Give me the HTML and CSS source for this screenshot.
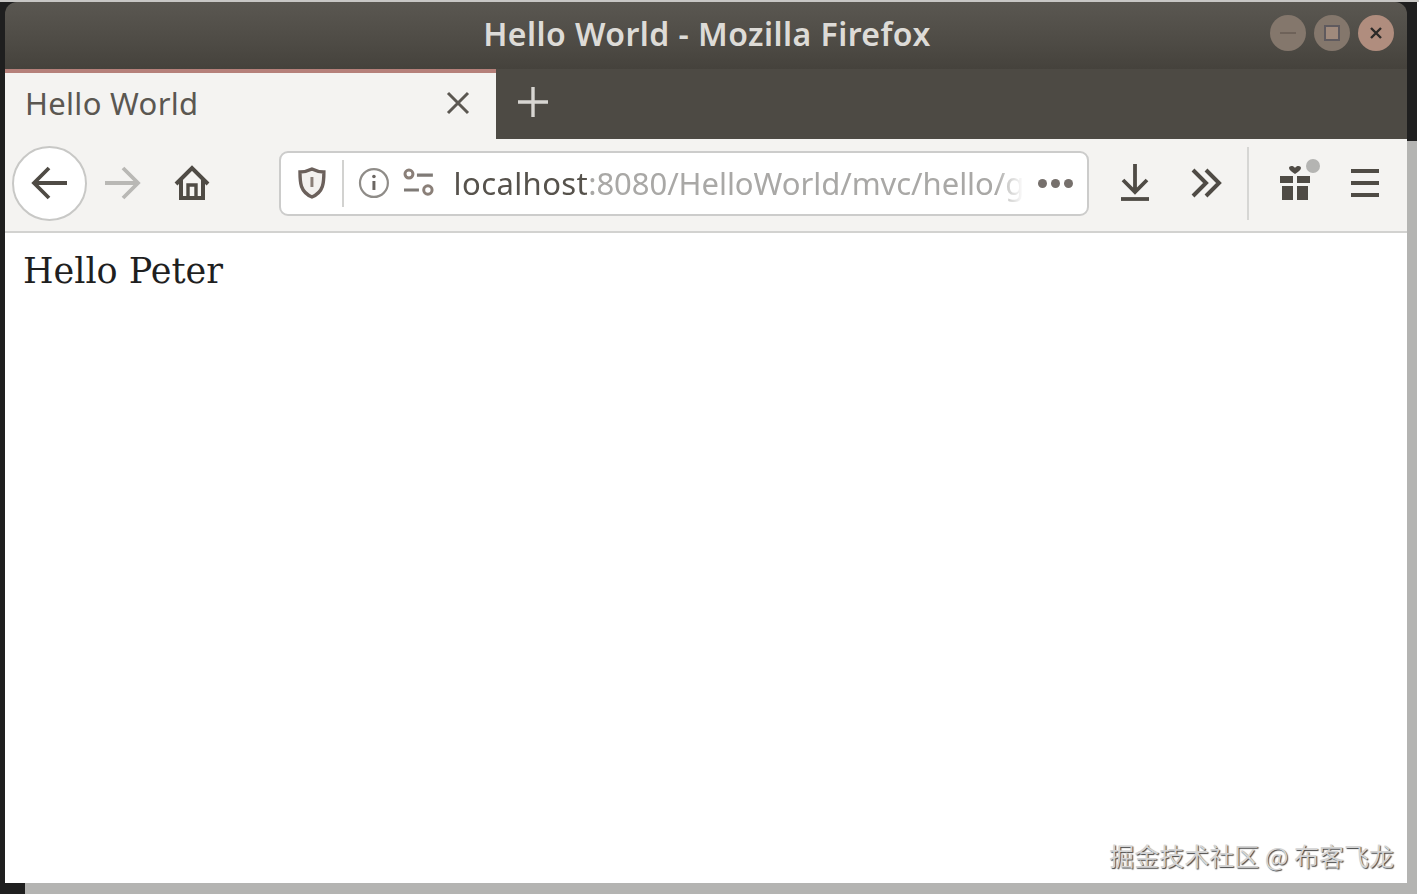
FILE: index.html
```html
<!DOCTYPE html>
<html lang="en">
<head>
    <meta charset="UTF-8">
    <title>Hello World - Mozilla Firefox</title>
    <link rel="stylesheet" href="styles.css">
</head>
<body>

<div class="window">
    <div class="main">
        <div class="titlebar">
            <div class="title">Hello World - Mozilla Firefox</div>
            <div class="win-buttons">
                <span class="win-btn"><svg width="20" height="20" viewBox="0 0 20 20"><path d="M2 10h16" stroke="#6e6259" stroke-width="2"/></svg></span>
                <span class="win-btn"><svg width="20" height="20" viewBox="0 0 20 20"><rect x="3" y="3" width="14" height="14" fill="#a08a7c" stroke="#5f5a5e" stroke-width="2"/></svg></span>
                <span class="win-btn win-close"><svg width="20" height="20" viewBox="0 0 20 20"><path d="M5 5l10 10M15 5L5 15" stroke="#2c2a28" stroke-width="2.4"/></svg></span>
            </div>
        </div>

        <div class="tabbar">
            <div class="tab">
                <span class="tab-label">Hello World</span>
                <svg class="tab-close" width="24" height="24" viewBox="0 0 24 24"><path d="M2 2l20 20M22 2L2 22" stroke="#5b5751" stroke-width="3"/></svg>
            </div>
            <svg class="new-tab" width="30" height="30" viewBox="0 0 30 30"><path d="M15 0v30M0 15h30" stroke="#d8d6d2" stroke-width="3.4"/></svg>
        </div>

        <div class="toolbar">
            <div class="back-btn">
                <svg width="38" height="34" viewBox="0 0 38 34"><path d="M36 17H3M18 2L3 17l15 15" fill="none" stroke="#4f4b45" stroke-width="3.8"/></svg>
            </div>
            <svg class="forward" width="36" height="34" viewBox="0 0 36 34"><path d="M0 17h33M18 2l15 15-15 15" fill="none" stroke="#b9b8b5" stroke-width="3.8"/></svg>
            <svg class="home" width="36" height="36" viewBox="0 0 36 36"><path d="M2 19L18 3l16 16M7 15v18h22V15" fill="none" stroke="#4f4b45" stroke-width="4"/><path d="M14 33V20h8v13" fill="none" stroke="#4f4b45" stroke-width="3.4"/></svg>

            <div class="urlbar">
                <svg class="shield" width="28" height="32" viewBox="0 0 28 32"><path d="M14 2c4 2 8 3 12 3 0 10 0 20-12 25C2 25 2 15 2 5c4 0 8-1 12-3z" fill="#f3f1ef" stroke="#6b605b" stroke-width="3.4"/><path d="M14 10v10" stroke="#8a7f78" stroke-width="3"/></svg>
                <span class="url-sep"></span>
                <svg class="info" width="32" height="32" viewBox="0 0 32 32"><circle cx="16" cy="16" r="14" fill="none" stroke="#8f8c88" stroke-width="2.2"/><path d="M16 14v9" stroke="#6b6662" stroke-width="3"/><circle cx="16" cy="9.5" r="1.8" fill="#6b6662"/></svg>
                <svg class="perm" width="32" height="30" viewBox="0 0 32 30"><circle cx="6" cy="6" r="4" fill="none" stroke="#8a7f78" stroke-width="3"/><path d="M14 7h16M1 22h15" stroke="#7f7a76" stroke-width="3.2"/><circle cx="25" cy="22" r="4.2" fill="none" stroke="#8a7f78" stroke-width="3"/></svg>
                <div class="url-text"><span class="url-host">localhost</span>:8080/HelloWorld/mvc/hello/g</div>
                <div class="url-dots"><i></i><i></i><i></i></div>
            </div>

            <svg class="download" width="30" height="38" viewBox="0 0 30 38"><path d="M15 0v28M3 16l12 12 12-12" fill="none" stroke="#4f4b45" stroke-width="3.8"/><path d="M1 35h28" stroke="#4f4b45" stroke-width="3.8"/></svg>
            <svg class="more" width="32" height="30" viewBox="0 0 32 30"><path d="M3 2l13 13L3 28M16 2l13 13-13 13" fill="none" stroke="#4f4b45" stroke-width="4"/></svg>
            <span class="tool-sep"></span>
            <div class="gift">
                <svg width="32" height="36" viewBox="0 0 32 36"><path d="M16 9C13 7 10 5 10 3c0-2 4-3 6 0 2-3 6-2 6 0 0 2-3 4-6 6z" fill="#4f4b45"/><path d="M1 11h13v7H1zM18 11h13v7H18zM3 21h11v14H3zM18 21h11v14H18z" fill="#4f4b45"/></svg>
                <span class="gift-dot"></span>
            </div>
            <svg class="menu" width="28" height="30" viewBox="0 0 28 30"><path d="M0 3h28M0 15h28M0 27h28" stroke="#4f4b45" stroke-width="4"/></svg>
        </div>

        <div class="content">Hello Peter</div>
    </div>
    <div class="watermark">掘金技术社区 @ 布客飞龙</div>
</div>

</body>
</html>
```

FILE: styles.css
```css
html, body {
    margin: 0;
    height: 100%;
    overflow: hidden;
}
body {
    background-color: #fff;
    font-family: "Noto Sans", sans-serif;
}
/* screenshot frame: dark on the left and top right, grey along the bottom and right */
.window {
    position: relative;
    box-sizing: border-box;
    width: 1419px;
    height: 896px;
    padding: 2px 12px 13px 5px;
    background:
        linear-gradient(#c8c7c5, #c8c7c5) top left / 100% 2px no-repeat,
        linear-gradient(#fff, #fff) top right / 2px 100% no-repeat,
        linear-gradient(#fff, #fff) bottom left / 100% 2px no-repeat,
        linear-gradient(#1f1f1f 141px, #b4b4b2 141px) top right 2px / 10px 100% no-repeat,
        linear-gradient(to right, #1f1f1f 25px, #b4b4b2 25px) bottom 2px left / 100% 11px no-repeat,
        #1f1f1f;
}
.main {
    display: flex;
    flex-direction: column;
    height: 100%;
}
.titlebar {
    display: grid;
    grid-template-columns: 1fr auto 1fr;
    align-items: center;
    height: 62px;
    flex: none;
    padding: 0 13px 5px 15px;
    background: linear-gradient(#5a5751, #4e4b45 60%, #45423c);
    border-radius: 12px 12px 0 0;
}
.title {
    grid-column: 2;
    font-size: 32px;
    font-weight: 600;
    letter-spacing: 0.45px;
    color: #dddbd7;
    white-space: nowrap;
}
.win-buttons {
    grid-column: 3;
    justify-self: end;
    display: flex;
    gap: 8px;
}
.win-btn {
    display: flex;
    align-items: center;
    justify-content: center;
    width: 36px;
    height: 36px;
    border-radius: 50%;
    background-color: #84776c;
}
.win-close {
    background-color: #b08d7e;
}
.tabbar {
    display: flex;
    align-items: center;
    height: 70px;
    flex: none;
    background-color: #4d4a44;
}
.tab {
    box-sizing: border-box;
    display: flex;
    align-items: center;
    justify-content: space-between;
    width: 491px;
    height: 100%;
    padding: 0 26px 7px 20px;
    background-color: #f4f3f1;
    border-top: 4px solid #b5807a;
}
.tab-label {
    font-size: 31px;
    letter-spacing: 0.3px;
    color: #5b5751;
}
.new-tab {
    margin: 0 0 5px 22px;
}
.toolbar {
    box-sizing: border-box;
    display: flex;
    align-items: center;
    height: 94px;
    flex: none;
    padding: 0 0 4px 7px;
    background-color: #f4f3f1;
    border-bottom: 2px solid #d2d2d0;
}
.back-btn {
    box-sizing: border-box;
    display: flex;
    align-items: center;
    justify-content: center;
    width: 75px;
    height: 75px;
    border: 2px solid #c8c8c6;
    border-radius: 50%;
    background-color: #fff;
}
.forward {
    margin-left: 18px;
}
.home {
    margin-left: 33px;
}
.urlbar {
    box-sizing: border-box;
    display: flex;
    align-items: center;
    width: 810px;
    height: 65px;
    margin-left: 69px;
    padding: 0 14px 0 17px;
    background-color: #fff;
    border: 2px solid #cccccb;
    border-radius: 9px;
}
.url-sep {
    width: 2px;
    height: 47px;
    margin: 0 14px 0 16px;
    background-color: #d2d2d0;
}
.perm {
    margin-left: 13px;
}
.url-text {
    width: 573px;
    margin-left: 19px;
    overflow: hidden;
    white-space: nowrap;
    font-size: 31px;
    letter-spacing: -0.05px;
    color: #a9a8a6;
    -webkit-mask-image: linear-gradient(to right, #000 95%, transparent);
    mask-image: linear-gradient(to right, #000 95%, transparent);
}
.url-host {
    letter-spacing: 0.4px;
    color: #56524c;
}
.url-dots {
    display: flex;
    gap: 4px;
    margin-left: 14px;
}
.url-dots i {
    width: 9px;
    height: 9px;
    border-radius: 50%;
    background-color: #76706c;
}
.download {
    margin-left: 31px;
}
.more {
    margin-left: 40px;
}
.tool-sep {
    width: 2px;
    height: 73px;
    margin-left: 25px;
    background-color: #d6d6d4;
}
.gift {
    position: relative;
    display: flex;
    margin-left: 30px;
}
.gift-dot {
    position: absolute;
    top: -6px;
    right: -9px;
    width: 14px;
    height: 14px;
    border-radius: 50%;
    background-color: #b4b4b2;
}
.menu {
    margin-left: 40px;
}
.content {
    flex: 1;
    padding: 18px 0 0 18px;
    background-color: #fff;
    font-family: "DejaVu Serif", serif;
    font-size: 35px;
    color: #1f1f1f;
}
.watermark {
    position: absolute;
    right: 25px;
    bottom: 23px;
    font-family: "Noto Sans CJK SC", sans-serif;
    font-size: 25px;
    color: #d4d4d4;
    text-shadow: 1px 1px 1px #444;
}
```
